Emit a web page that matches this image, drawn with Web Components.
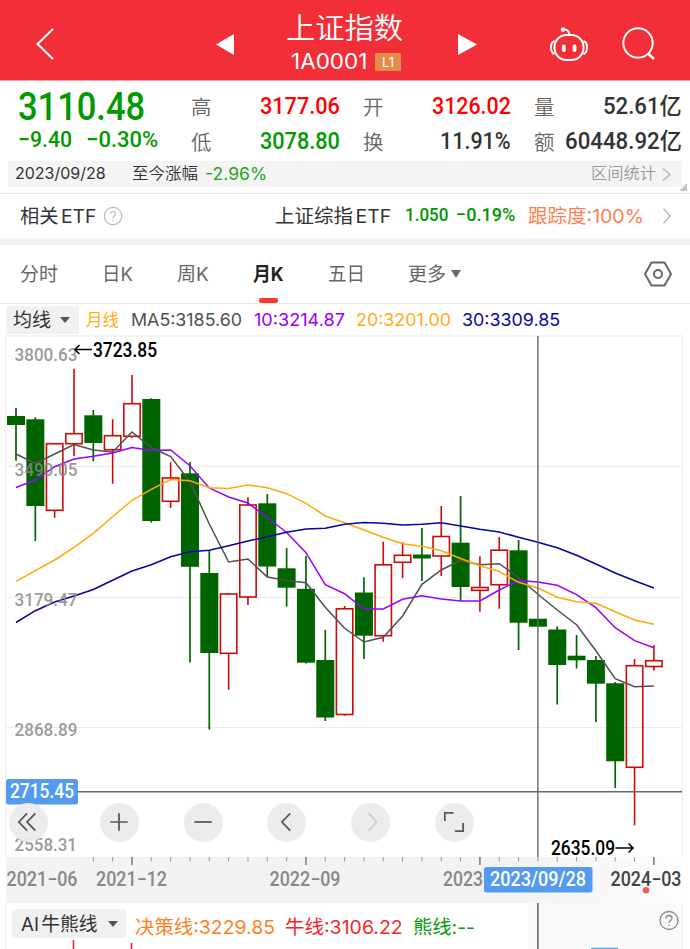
<!DOCTYPE html>
<html lang="zh-CN">
<head>
<meta charset="utf-8">
<title>上证指数</title>
<style>
  body {
    margin: 0;
    background: #fff;
    color: #333;
    font-family: Inter, "Noto Sans CJK SC", sans-serif;
  }
</style>
</head>
<body>
<stock-page></stock-page>

<script>
const define = (name, html, setup) => {
  const template = document.createElement('template');
  template.innerHTML = html;
  customElements.define(name, class extends HTMLElement {
    connectedCallback() {
      this.attachShadow({ mode: 'open' });
      this.shadowRoot.appendChild(template.content.cloneNode(true));
      if (setup) setup(this, this.shadowRoot);
    }
  });
};

// one line of text squeezed or stretched to the width in "w"
define('fit-text', `
  <style>
    :host { display: block; flex: none; line-height: 1.2; white-space: nowrap; }
    span { display: inline-block; transform-origin: 0 50%; }
  </style>
  <span><slot></slot></span>
`, (host, root) => {
  const span = root.querySelector('span');
  const w = +host.getAttribute('w');
  host.style.width = w + 'px';
  span.style.transform = `scaleX(${w / span.offsetWidth})`;
});

define('app-header', `
  <style>
    :host {
      display: flex;
      align-items: center;
      height: 81px;
      box-sizing: border-box;
      padding: 8px 35px 0 36px;
      background: #f22f38;
      color: #fff;
      border-bottom: 1px solid #f0a0a4;
    }
    svg { display: block; flex: none; fill: none; stroke: #fff; stroke-width: 2; }
    .solid { fill: #fff; stroke: none; }
    .title { margin-left: 52px; width: 118px; }
    .name { font: 350 29px/30px "Noto Sans CJK SC", sans-serif; margin-top: -2px; }
    .code { display: flex; align-items: center; margin: 8px 0 0 5px; height: 26px; }
    .code fit-text { font-size: 21px; }
    .badge {
      margin-left: 8px;
      width: 26px;
      height: 18px;
      background: #e48d49;
      font: 13px/18px Inter, sans-serif;
      text-align: center;
    }
  </style>
  <svg width="18" height="32" viewBox="0 0 18 32"><path d="M17 1 1.5 16 17 31" /></svg>
  <svg class="solid" style="margin-left: 162px" width="18" height="21" viewBox="0 0 18 21"><path d="M18 0V21L0 10.5z" /></svg>
  <div class="title">
    <fit-text class="name" w="117">上证指数</fit-text>
    <div class="code"><fit-text w="76">1A0001</fit-text><span class="badge">L1</span></div>
  </div>
  <svg class="solid" style="margin-left: 55px" width="20" height="21" viewBox="0 0 20 21"><path d="M0 0V21L19 10.5z" /></svg>
  <svg style="margin-left: 72px" width="38" height="36" viewBox="0 0 38 36">
    <rect x="4.5" y="9" width="29" height="25" rx="12" />
    <path d="M4.5 15Q1 16 1 21.5T4.5 28M33.500 15Q37 16 37 21.500T33.500 28" />
    <path d="M14 3.500Q18.500 3 19.500 9" />
    <circle cx="13" cy="3.500" r="2.200" fill="#fff" stroke="none" />
    <path d="M13.800 20.500v3.500M24.500 20.500v3.500" stroke-width="3.800" stroke-linecap="round" />
  </svg>
  <svg style="margin-left: 34px" width="34" height="34" viewBox="0 0 34 34">
    <circle cx="16" cy="16" r="14.700" /><path d="M26 26.500 32 32" stroke-width="2.500" />
  </svg>
`);

define('quote-board', `
  <style>
    :host {
      display: flex;
      height: 80px;
      box-sizing: border-box;
      padding: 9px 8px 0 18px;
      font-family: Roboto, "Noto Sans CJK SC", sans-serif;
      font-weight: 500;
      color: #333;
    }
    .main { width: 173px; color: #090; }
    .price { font-size: 38px; line-height: 35px; }
    .diff { display: flex; gap: 14px; font-size: 22px; line-height: 29px; }
    .diff fit-text, .grid fit-text { line-height: inherit; }
    .grid {
      display: grid;
      grid-template-columns: 69px 103px 69px 102px 21px 1fr;
      grid-auto-rows: 35px;
      flex: 1;
      margin-top: -1px;
      font-size: 23px;
      line-height: 35px;
    }
    .label { font: 350 20.500px/34px "Noto Sans CJK SC", sans-serif; color: #666; }
    .up { color: #f00; }
    .down { color: #090; }
    .end { justify-self: end; }
  </style>
  <div class="main">
    <fit-text class="price" w="127">3110.48</fit-text>
    <div class="diff"><fit-text w="54">−9.40</fit-text><fit-text w="72">−0.30%</fit-text></div>
  </div>
  <div class="grid">
    <span class="label">高</span><fit-text class="up" w="80">3177.06</fit-text>
    <span class="label">开</span><fit-text class="up" w="79">3126.02</fit-text>
    <span class="label">量</span><fit-text class="end" w="79">52.61亿</fit-text>
    <span class="label">低</span><fit-text class="down" w="80">3078.80</fit-text>
    <span class="label">换</span><fit-text style="margin-left: 8px" w="71">11.91%</fit-text>
    <span class="label">额</span><fit-text class="end" w="117">60448.92亿</fit-text>
  </div>
`);

define('range-strip', `
  <style>
    :host { display: block; height: 33px; border-bottom: 1px solid #e6e6e6; box-sizing: border-box; }
    .bar {
      display: flex;
      align-items: center;
      margin: 0 8px;
      height: 26px;
      padding: 0 11px 0 7px;
      background: #f4f4f4;
      font-size: 16px;
    }
    .corner { display: block; margin: -4px 3px 0 auto; fill: #c4c4c4; }
    .more { margin-left: auto; color: #999; font-weight: 350; }
  </style>
  <div class="bar">
    <fit-text w="91">2023/09/28</fit-text>
    <fit-text style="margin-left: 26px; font-weight: 350" w="66">至今涨幅</fit-text>
    <fit-text style="margin: 0 0 0 7px; color: #2aa31f; font-size: 17px" w="62">-2.96%</fit-text>
    <fit-text class="more" w="65">区间统计</fit-text>
    <svg style="margin-left: 6px" width="9" height="13" viewBox="0 0 9 13" fill="none" stroke="#bbb" stroke-width="1.500"><path d="M1 .5 8 6.500 1 12.500" /></svg>
  </div>
  <svg class="corner" width="8" height="8"><path d="M8 0V8H0z" /></svg>
`);

define('etf-row', `
  <style>
    :host {
      display: flex;
      align-items: center;
      height: 51px;
      box-sizing: border-box;
      padding: 0 19px 1px 20px;
      border-bottom: 7px solid #f4f4f4;
      font-size: 19px;
      word-spacing: -3px;
    }
    .text { padding-top: 3px; }
    .num { font-family: Roboto, sans-serif; font-weight: 500; color: #090; font-size: 19px; }
  </style>
  <fit-text class="text" w="76">相关 ETF</fit-text>
  <svg style="margin-left: 7px" width="20" height="20" viewBox="0 0 20 20" fill="none" stroke="#bbb" stroke-width="1.200">
    <circle cx="10" cy="10" r="8.700" /><path d="M7.500 8Q7.500 5.500 10 5.500T12.500 8Q12.500 9.200 11 10.200Q10 11 10 12.200M10 13.500v1.200" />
  </svg>
  <fit-text class="text" style="margin-left: 152px" w="116">上证综指 ETF</fit-text>
  <fit-text class="num" style="margin-left: 14px" w="43">1.050</fit-text>
  <fit-text class="num" style="margin-left: 8px" w="59">−0.19%</fit-text>
  <fit-text class="text" style="margin-left: 13px; color: #ff7f50" w="116">跟踪度:100%</fit-text>
  <svg style="margin-left: auto" width="8" height="16" viewBox="0 0 8 16" fill="none" stroke="#bbb" stroke-width="1.500"><path d="M.5 .5 7 8 .5 15.500" /></svg>
`);

define('period-tabs', `
  <style>
    :host {
      display: flex;
      align-items: center;
      height: 59px;
      box-sizing: border-box;
      padding: 0 18px 0 20px;
      border-bottom: 1px solid #e8e8e8;
      color: #666;
      font-size: 19px;
    }
    fit-text { padding-top: 2px; }
    .active {
      align-self: stretch;
      display: flex;
      flex-direction: column;
      align-items: center;
      color: #222;
      font-weight: 700;
      margin-left: 44px;
    }
    .active fit-text { margin-top: 17px; }
    .active i { width: 19px; height: 5px; border-radius: 2px; background: #fb3b33; margin-top: auto; }
  </style>
  <fit-text w="38">分时</fit-text>
  <fit-text style="margin-left: 44px" w="31">日K</fit-text>
  <fit-text style="margin-left: 44px" w="32">周K</fit-text>
  <div class="active"><fit-text w="31">月K</fit-text><i></i></div>
  <fit-text style="margin-left: 44px" w="37">五日</fit-text>
  <fit-text style="margin-left: 43px" w="38">更多</fit-text>
  <svg style="margin-left: 5px" width="10" height="8"><path d="M0 0H10L5 8z" fill="#666" /></svg>
  <svg style="margin-left: auto" width="28" height="26" viewBox="0 0 28 26" fill="none" stroke="#666" stroke-width="2" stroke-linejoin="round">
    <path d="M7.500 1.500H20.500L27 13 20.500 24.500H7.500L1 13z" /><circle cx="14" cy="13" r="4" />
  </svg>
`);

define('pick-chip', `
  <style>
    :host {
      display: inline-flex;
      align-items: center;
      gap: 9px;
      height: 28px;
      border-radius: 3px;
      background: #f1f1f1;
      color: #333;
      box-sizing: border-box;
      flex: none;
    }
    ::slotted(fit-text) { padding-top: 4px; }
  </style>
  <slot></slot><svg width="10" height="6"><path d="M0 0H10L5 6z" fill="#555" /></svg>
`);

define('average-legend', `
  <style>
    :host { display: flex; align-items: center; height: 31px; padding-left: 6px; font-size: 17.500px; }
    pick-chip { width: 73px; padding-left: 7px; font-size: 19px; }
  </style>
  <pick-chip><fit-text w="38">均线</fit-text></pick-chip>
  <fit-text style="margin-left: 7px; color: #ffae1a" w="33">月线</fit-text>
  <fit-text style="margin-left: 12px; color: #505050" w="111">MA5:3185.60</fit-text>
  <fit-text style="margin-left: 12px; color: #9a00ff" w="91">10:3214.87</fit-text>
  <fit-text style="margin-left: 11px; color: #ffae1a" w="95">20:3201.00</fit-text>
  <fit-text style="margin-left: 11px; color: #0a0aa0" w="98">30:3309.85</fit-text>
`);

// high, body top, body bottom, low, 1 = rising (hollow)
const candles = [
  [408, 416, 425, 460.7, 0], [417.3, 419.3, 506, 541, 0], [443, 443.7, 510.3, 517.7, 1],
  [368.7, 433.7, 443.7, 456, 1], [410, 415.3, 443, 461.3, 0], [419.3, 435.7, 449.7, 483.7, 1],
  [375, 403.7, 436.3, 437.7, 1], [398.3, 399, 521, 522.5, 0], [462.3, 478, 501.3, 508, 1],
  [462.3, 473.3, 566.8, 662.5, 0], [550.7, 573, 653, 729.5, 0], [593, 594, 653.3, 689.7, 1],
  [497.3, 505, 597, 605, 1], [494, 503.3, 566.5, 577, 0], [548, 568.3, 587.7, 606.7, 0],
  [556, 588.8, 662.7, 663.5, 0], [630, 660, 717.5, 721, 0], [606, 608.8, 714.5, 715.7, 1],
  [577.3, 592.5, 635.7, 659, 0], [541.7, 564.8, 635.7, 641.7, 1], [542.3, 555.3, 562.3, 578.3, 1],
  [528, 554.5, 558.5, 581, 0], [506, 536.5, 556, 576, 1], [496, 542.7, 587, 601, 0],
  [556.3, 587.5, 590.3, 611.7, 1], [537, 550.2, 584.7, 608.7, 1], [540, 550.3, 622.7, 650, 0],
  [618.7, 618.7, 626.7, 626.7, 0], [626.3, 629.5, 665, 704.5, 0], [635, 655.7, 660.3, 668.5, 0],
  [656, 660, 683.7, 722, 0], [682, 683.3, 761.3, 788, 0], [659, 665.7, 767.3, 825.3, 1],
  [645.3, 660.7, 666.5, 670.7, 1]
];

const averages = {
  '#505050': [454, 463.5, 454, 444.5, 450, 452, 432, 447.5, 456.5, 481.7, 524, 562, 559, 577, 580.5, 582.7, 607.3, 628.3, 642, 637.3, 616, 584.3, 570, 560.3, 564.7, 563.7, 577.5, 594.3, 610, 624.7, 650.7, 678.7, 686.7, 686],
  '#9a00ff': [487.5, 480, 466.7, 459, 456.3, 453, 447.5, 450.5, 450, 465.7, 488, 497, 503, 517.5, 532.5, 552.7, 584.7, 593.7, 609, 609, 599.3, 595.7, 599, 601, 601, 590, 580.5, 582, 585.3, 594.7, 607.7, 627.7, 640.7, 647.7],
  '#ffa90a': [581.3, 570.7, 560, 547.3, 533.3, 516.7, 500.3, 489.3, 479.5, 480.7, 487.7, 488.5, 485, 487.7, 493.7, 503.3, 516, 522.7, 530, 537.3, 543.7, 546.3, 550.7, 558.5, 565.7, 571.5, 582.3, 588, 597.3, 601.7, 603.3, 611.7, 620, 624.3],
  '#0505a0': [622.5, 610.7, 602, 596, 589.5, 580.3, 571, 564.7, 556.7, 551.7, 550.3, 545.7, 541, 536.7, 532.3, 529, 528.3, 524.3, 522.5, 523.3, 525, 524.3, 522.7, 526, 529.3, 532, 537.3, 542.3, 547.7, 555.3, 564, 573, 580.7, 588]
};

const slotX = i => 16 + i * 19.33;

const candle = ([high, top, bottom, low, up], i) => {
  const x = slotX(i);
  if (up) {
    return `<g stroke="#cd0a0a" stroke-width="1.600" fill="none">
      <path d="M${x} ${high}V${top}M${x} ${bottom}V${low}" />
      <rect x="${x - 8.2}" y="${top}" width="16.400" height="${bottom - top}" /></g>`;
  }
  return `<path d="M${x} ${high}V${low}" stroke="#006400" stroke-width="1.700" />
    <rect x="${x - 9}" y="${top}" width="18" height="${bottom - top}" fill="#006400" />`;
};

const averageLine = ([color, ys]) =>
  `<polyline fill="none" stroke="${color}" stroke-width="1.500" points="${ys.map((y, i) => slotX(i) + ',' + y).join(' ')}" />`;

const svgLabel = (x, y, w, text, cls) =>
  `<text class="${cls}" x="${x}" y="${y}" textLength="${w}" lengthAdjust="spacingAndGlyphs">${text}</text>`;

define('round-button', `
  <style>
    :host {
      display: flex;
      align-items: center;
      justify-content: center;
      width: 39px;
      height: 39px;
      border-radius: 50%;
      background: rgba(235, 235, 235, .93);
    }
  </style>
  <svg width="22" height="22" viewBox="0 0 24 24" fill="none" stroke="#555" stroke-width="1.900"><path /></svg>
`, (host, root) => {
  root.querySelector('path').setAttribute('d', host.getAttribute('d'));
  if (host.hasAttribute('off')) root.querySelector('svg').setAttribute('stroke', '#ccc');
});

define('candle-chart', `
  <style>
    :host { display: block; position: relative; height: 522px; }
    svg { display: block; overflow: visible; }
    text { font-family: Roboto, sans-serif; font-weight: 500; font-size: 19.500px; }
    .scale { fill: #888; fill-opacity: .85; font-size: 19px; }
    .mark { fill: #000; }
    .cursor { fill: #fff; }
    .tools { position: absolute; left: 8.500px; top: 467.500px; display: flex; gap: 44.800px; }
    .tools round-button:first-child { margin-right: 7.500px; }
  </style>
  <svg width="690" height="522" viewBox="0 335 690 522">
    <g stroke="#ececec" fill="none">
      <path d="M5.500 857V336H682.500V857" stroke="#f0f0f0" stroke-width="1.500" />
      <path d="M6 466.500H682M6 597.500H682M6 727.500H682" />
    </g>
    ${candles.map(candle).join('')}
    ${Object.entries(averages).map(averageLine).join('')}
    ${svgLabel(14.5, 361, 63, '3800.63', 'scale')}
    ${svgLabel(14.5, 475.5, 63, '3490.05', 'scale')}
    ${svgLabel(14.5, 606, 63, '3179.47', 'scale')}
    ${svgLabel(14.5, 736, 63, '2868.89', 'scale')}
    ${svgLabel(14.5, 850.5, 62.5, '2558.31', 'scale')}
    ${svgLabel(93, 356.5, 64, '3723.85', 'mark')}
    ${svgLabel(551, 854.5, 64, '2635.09', 'mark')}
    <path d="M92 349.500H75M79.500 345 75 349.500 79.500 354M615.500 848H633M628.500 843.500 633 848 628.500 852.500" fill="none" stroke="#000" stroke-width="1.500" />
    <path d="M537.900 336V857M6 791.800H682" stroke="#666" stroke-width="1.400" />
    <rect x="6" y="779" width="72" height="25.500" rx="2.500" fill="#549bf0" />
    ${svgLabel(10, 798, 64, '2715.45', 'cursor')}
  </svg>
  <div class="tools">
    <round-button d="M11 2.500 2 12 11 21.500M20 2.500 11 12 20 21.500"></round-button>
    <round-button d="M2.500 12H21.500M12 2.500V21.500"></round-button>
    <round-button d="M2.500 12H21.500"></round-button>
    <round-button d="M15.500 2.500 6.500 12 15.500 21.500"></round-button>
    <round-button off d="M9.500 2.500 18 12 9.500 21.500"></round-button>
    <round-button d="M2 11V2H11.500M13 22H22V13"></round-button>
  </div>
`);

const ticks = Array.from({ length: 30 }, (_, n) => {
  const i = n + 4;
  const major = i % 9 === 6;
  return `<path d="M${slotX(i)} 0V${major ? 8 : 4.5}" stroke="${major ? '#777' : '#999'}" stroke-width="${major ? 1.5 : 1}" />`;
}).join('');

define('time-axis', `
  <style>
    :host {
      display: block;
      height: 46px;
      margin-left: 6px;
      background: linear-gradient(90deg, #f3f3f3 0, #f3f3f3 75%, #fafafa 92%, #fff 100%);
    }
    svg { display: block; }
    text { font: 500 19.500px Roboto, sans-serif; }
    .date { fill: #888; }
    .last { fill: #444; }
    .cursor { fill: #fff; }
  </style>
  <svg width="684" height="46" viewBox="6 0 684 46">
    ${ticks}
    ${svgLabel(6.5, 28.500, 71, '2021−06', 'date')}
    ${svgLabel(96, 28.500, 71, '2021−12', 'date')}
    ${svgLabel(269.5, 28.500, 71, '2022−09', 'date')}
    ${svgLabel(443, 28.500, 40, '2023', 'date')}
    ${svgLabel(610.5, 28.500, 71, '2024−03', 'last')}
    <rect x="484" y="10" width="108.500" height="25.500" rx="2.500" fill="#549bf0" />
    ${svgLabel(490, 28.500, 96, '2023/09/28', 'cursor')}
    <circle cx="646" cy="33.300" r="3.300" fill="#f65a5e" />
  </svg>
`);

define('bull-bear-panel', `
  <style>
    :host {
      display: flex;
      align-items: flex-start;
      position: relative;
      height: 46px;
      padding-left: 6px;
      overflow: hidden;
      font-size: 19px;
      word-spacing: -3px;
      background: linear-gradient(90deg, #fff 528px, #fafafa 528px, #fafafa 682px, #fff 682px);
    }
    pick-chip { width: 114px; height: 29px; margin: 6px 0 0 6px; padding-left: 9px; gap: 10px; }
    fit-text { margin-top: 14px; }
    pick-chip fit-text { margin-top: 0; }
    .marks { position: absolute; left: 0; top: 0; }
  </style>
  <pick-chip><fit-text w="77">AI 牛熊线</fit-text></pick-chip>
  <fit-text style="margin-left: 9px; color: #ff7f1e" w="140">决策线:3229.85</fit-text>
  <fit-text style="margin-left: 10px; color: #f0282d" w="118">牛线:3106.22</fit-text>
  <fit-text style="margin-left: 10px; color: #0a9a0a" w="62">熊线:--</fit-text>
  <svg class="marks" width="690" height="46" fill="none">
    <path d="M5.500 0V46M682.500 0V46" stroke="#f0f0f0" />
    <path d="M537.900 0V46" stroke="#555" stroke-width="1.400" />
    <path d="M73.500 37V46M131.500 40V46" stroke="#e0282d" stroke-width="1.600" />
    <path d="M591 45.500H618" stroke="#549bf0" stroke-width="1.500" />
    <g stroke="#888" stroke-width="1.300">
      <circle cx="669" cy="17.500" r="9" />
      <path d="M666 15.500Q666 12.500 669 12.500T672 15.300Q672 16.700 670.200 17.700Q669 18.500 669 20M669 21.500v1.500" />
    </g>
  </svg>
`);

define('stock-page', `
  <style>
    :host { display: block; width: 690px; height: 949px; overflow: hidden; background: #fff; }
  </style>
  <app-header></app-header>
  <quote-board></quote-board>
  <range-strip></range-strip>
  <etf-row></etf-row>
  <period-tabs></period-tabs>
  <average-legend></average-legend>
  <candle-chart></candle-chart>
  <time-axis></time-axis>
  <bull-bear-panel></bull-bear-panel>
`);
</script>
</body>
</html>
